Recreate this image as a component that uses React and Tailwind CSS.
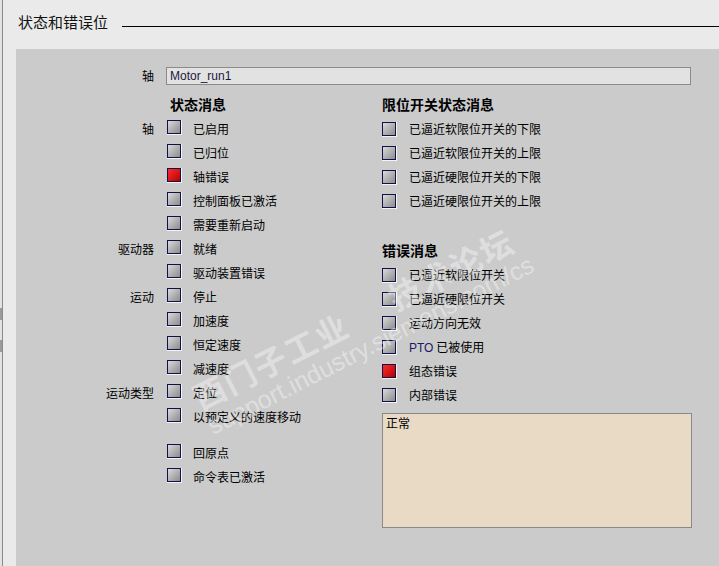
import React from "react";

const cjk = { fontFamily: '"Noto Sans CJK SC", "Noto Sans", sans-serif' };

function Box({ on }) {
  return (
    <span className="inline-flex w-[15px] h-[15px] shrink-0 border-r border-b border-[#f4f4f4]">
      <span
        className={`block w-[14px] h-[14px] border-[1.5px] border-[#12124a] ${
          on
            ? "bg-gradient-to-br from-[#ff2a2a] to-[#b40000]"
            : "bg-gradient-to-br from-[#dadada] to-[#8c8c8c]"
        }`}
      />
    </span>
  );
}

function Row({ label, text, on }) {
  return (
    <div className="flex items-center h-[24px]">
      <div className="w-[139px] text-right pr-[1px]">{label}</div>
      <div className="ml-[12px]">
        <Box on={on} />
      </div>
      <div className="ml-[11px] whitespace-nowrap">{text}</div>
    </div>
  );
}

function RRow({ text, on }) {
  return (
    <div className="flex items-center h-[24px]">
      <Box on={on} />
      <div className="ml-[12px] whitespace-nowrap">{text}</div>
    </div>
  );
}

const left = [
  ["轴", "已启用"],
  ["", "已归位"],
  ["", "轴错误", true],
  ["", "控制面板已激活"],
  ["", "需要重新启动"],
  ["驱动器", "就绪"],
  ["", "驱动装置错误"],
  ["运动", "停止"],
  ["", "加速度"],
  ["", "恒定速度"],
  ["", "减速度"],
  ["运动类型", "定位"],
  ["", "以预定义的速度移动"],
];

const limits = [
  "已逼近软限位开关的下限",
  "已逼近软限位开关的上限",
  "已逼近硬限位开关的下限",
  "已逼近硬限位开关的上限",
];

const errors = [
  ["已逼近软限位开关"],
  ["已逼近硬限位开关"],
  ["运动方向无效"],
  [
    <span>
      <span className="text-[#1a1a6a]" style={{ fontFamily: '"Liberation Sans", sans-serif' }}>
        PTO
      </span>{" "}
      已被使用
    </span>,
  ],
  ["组态错误", true],
  ["内部错误"],
];

export default function App() {
  return (
    <div
      className="w-[719px] h-[566px] bg-[#eaeaea] flex overflow-hidden text-[12px] text-black relative"
      style={cjk}
    >
      {/* left splitter edge */}
      <div className="w-[2px] bg-[#e2e2e2] flex flex-col">
        <div className="h-[308px]" />
        <div className="h-[12px] bg-[#9a9a9a]" />
        <div className="h-[20px]" />
        <div className="h-[12px] bg-[#9a9a9a]" />
      </div>
      <div className="w-[1px] bg-[#8a8a8a]" />
      <div className="flex-1 flex flex-col">
        {/* header */}
        <div className="h-[49px] flex items-start pt-[12px]">
          <div className="ml-[15px] text-[15px] leading-[20px] text-[#111]">状态和错误位</div>
          <div className="flex-1 ml-[14px] mt-[14px] h-[1px] bg-black" />
        </div>

        {/* panel */}
        <div className="flex-1 ml-[13px] bg-[#cbcbcb] relative overflow-hidden">
          <div className="pt-[18px]">
            <div className="flex items-center h-[18px]">
              <div className="w-[139px] text-right pr-[1px]">轴</div>
              <div
                className="ml-[11px] w-[525px] h-[18px] bg-[#e2e2e2] border border-[#8a8a8a] px-[3px] leading-[16px] text-[12px] text-[#1a1a40]"
                style={{ fontFamily: '"Liberation Sans", sans-serif' }}
              >
                Motor_run1
              </div>
            </div>

            <div className="flex mt-[6px]">
              {/* left column */}
              <div className="w-[366px]">
                <div className="h-[26px] flex items-center pl-[154px] text-[14px] font-bold">
                  状态消息
                </div>
                {left.map(([l, t, on], i) => (
                  <Row key={i} label={l} text={t} on={on} />
                ))}
                <div className="h-[12px]" />
                <Row label="" text="回原点" />
                <Row label="" text="命令表已激活" />
              </div>

              {/* right column */}
              <div className="flex-1">
                <div className="h-[26px] flex items-center text-[14px] font-bold">
                  限位开关状态消息
                </div>
                {limits.map((t, i) => (
                  <RRow key={i} text={t} />
                ))}
                <div className="h-[26px] mt-[24px] flex items-center text-[14px] font-bold">
                  错误消息
                </div>
                {errors.map(([t, on], i) => (
                  <RRow key={i} text={t} on={on} />
                ))}
                <div className="mt-[6px] w-[310px] h-[115px] bg-[#e8dac5] border border-[#8a8a8a] px-[3px] pt-[1px] leading-[16px]">
                  正常
                </div>
              </div>
            </div>
          </div>

          {/* watermark */}
          <div
            className="absolute left-[185px] top-[330px] origin-left -rotate-[27deg] text-white/40 pointer-events-none whitespace-nowrap"
          >
            <div className="text-[32px] leading-[36px] font-bold tracking-[2px]">
              西门子工业 <span className="ml-[40px]">技术论坛</span>
            </div>
            <div
              className="text-[25px] leading-[28px]"
              style={{ fontFamily: '"Liberation Sans", sans-serif' }}
            >
              support.industry.siemens.com/cs
            </div>
          </div>
        </div>
      </div>
    </div>
  );
}
